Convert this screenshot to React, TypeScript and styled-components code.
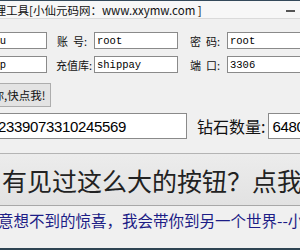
import styled, { createGlobalStyle } from 'styled-components';

const GlobalStyle = createGlobalStyle`
  html, body {
    margin: 0;
    padding: 0;
    background: #f0f0f0;
  }
  * {
    box-sizing: border-box;
  }
`

const cjk = `"Noto Sans CJK SC", "Liberation Sans", sans-serif`;

const Window = styled.div`
  width: 300px;
  height: 250px;
  overflow: hidden;
  display: flex;
  flex-direction: column;
  background: #f0f0f0;
  border-top: 1px solid #34495a;
`

const TitleBar = styled.div`
  height: 18px;
  display: flex;
  align-items: center;
  justify-content: space-between;
  background: #f7f7f7;
  border-bottom: 1px solid #dadada;
  padding-right: 5px;
`

const Title = styled.span`
  margin-left: -17px;
  font-family: ${cjk};
  font-size: 11.5px;
  color: #111;
  white-space: nowrap;
`

const Minimize = styled.span`
  width: 9px;
  height: 2px;
  background: #555;
  margin-top: 2px;
`

const Form = styled.div`
  margin-top: 13px;
  margin-left: -60px;
  display: grid;
  grid-template-columns: 107px 47px 84px 49px 120px;
  grid-auto-rows: 17px;
  row-gap: 7px;
  align-items: center;
`

const Label = styled.span<{ $pad: number }>`
  padding-left: ${(p) => p.$pad}px;
  font-family: ${cjk};
  font-size: 11px;
  color: #111;
  white-space: pre;
`

const TextBox = styled.div`
  height: 17px;
  background: #fff;
  border: 1px solid #8a8a8a;
  padding: 0 2px;
  display: flex;
  align-items: center;
  font-family: "Liberation Mono", monospace;
  font-size: 10.5px;
  color: #000;
  white-space: nowrap;
  overflow: hidden;
`

const SmallButton = styled.div`
  margin-top: 10px;
  margin-left: -13px;
  width: 64px;
  height: 24px;
  display: flex;
  align-items: center;
  justify-content: center;
  background: #e3e3e3;
  border: 1px solid #adadad;
  font-family: ${cjk};
  font-size: 11.5px;
  color: #111;
  white-space: nowrap;
`

const BigRow = styled.div`
  margin-top: 6px;
  height: 26px;
  display: flex;
  align-items: center;
`

const BigBox = styled.div<{ $w: number; $shift?: number }>`
  width: ${(p) => p.$w}px;
  margin-left: ${(p) => p.$shift ?? 0}px;
  height: 26px;
  flex-shrink: 0;
  background: #fff;
  border: 1px solid #8a8a8a;
  padding: 0 3px;
  display: flex;
  align-items: center;
  font-family: "Liberation Sans", sans-serif;
  font-size: 15px;
  letter-spacing: -0.35px;
  color: #000;
  white-space: nowrap;
  overflow: hidden;
`

const BigLabel = styled.span`
  margin: 0 3px 0 10px;
  font-family: ${cjk};
  font-size: 16px;
  color: #111;
  white-space: nowrap;
  flex-shrink: 0;
`

const HugeButton = styled.div`
  margin-top: 14px;
  height: 53px;
  display: flex;
  align-items: center;
  padding-left: 2px;
  background: linear-gradient(#ececec, #e2e2e2);
  border-top: 1px solid #b4b4b4;
  border-bottom: 1px solid #a8a8a8;
  font-family: ${cjk};
  font-size: 25px;
  color: #222;
  white-space: nowrap;
`

const LinkText = styled.div`
  margin-top: 4px;
  margin-left: -2px;
  height: 20px;
  display: flex;
  align-items: center;
  font-family: ${cjk};
  font-size: 15.5px;
  color: #1c1c86;
  white-space: nowrap;
`

const BottomEdge = styled.div`
  margin-top: auto;
  height: 2px;
  background: #2e4352;
`

export default function App() {
  return (
    <>
      <GlobalStyle />
      <Window>
        <TitleBar>
          <Title>管理工具[小仙元码网：www.xxymw.com ]</Title>
          <Minimize />
        </TitleBar>
        <Form>
          <TextBox>xxymw_menu</TextBox>
          <Label $pad={10}>账  号:</Label>
          <TextBox>root</TextBox>
          <Label $pad={12}>密  码:</Label>
          <TextBox>root</TextBox>
          <TextBox>xxymw_shop</TextBox>
          <Label $pad={9}>充值库:</Label>
          <TextBox>shippay</TextBox>
          <Label $pad={12}>端  口:</Label>
          <TextBox>3306</TextBox>
        </Form>
        <SmallButton>你,快点我!</SmallButton>
        <BigRow>
          <BigBox $w={193} $shift={-6}>2339073310245569</BigBox>
          <BigLabel>钻石数量:</BigLabel>
          <BigBox $w={100}>6480</BigBox>
        </BigRow>
        <HugeButton>有见过这么大的按钮？点我</HugeButton>
        <LinkText>意想不到的惊喜，我会带你到另一个世界--小</LinkText>
        <BottomEdge />
      </Window>
    </>
  );
}
